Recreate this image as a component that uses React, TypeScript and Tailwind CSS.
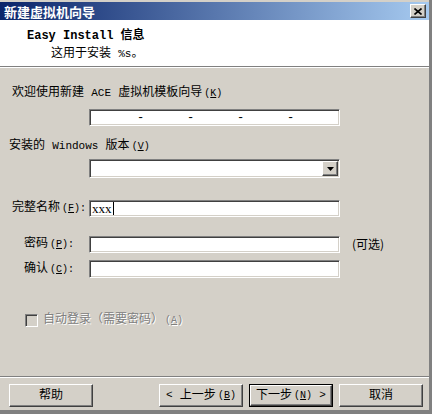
import React from "react";

const sunken =
  "border border-t-[#808080] border-l-[#808080] border-b-white border-r-white shadow-[inset_1px_1px_0_#404040,inset_-1px_-1px_0_#d4d0c8]";
const raised =
  "border border-t-white border-l-white border-b-[#404040] border-r-[#404040] shadow-[inset_-1px_-1px_0_#808080] bg-[#d4d0c8]";

const font = "font-['Liberation_Mono','Noto_Sans_CJK_SC',monospace]";

// half-width latin runs, SimSun style
const L = ({ children }: { children: React.ReactNode }) => <span className="text-[11px]">{children}</span>;

const Key = ({ k }: { k: string }) => (
  <span className="text-[10px] ml-[2px]">
    (<u>{k}</u>)
  </span>
);

const Field = ({ children, className = "" }: { children?: React.ReactNode; className?: string }) => (
  <div className={`${sunken} bg-white w-[251px] h-[17px] flex items-center ${className}`}>{children}</div>
);

const Btn = ({ children, primary }: { children: React.ReactNode; primary?: boolean }) =>
  primary ? (
    <div className="border border-black w-[84px] h-[23px] flex">
      <div className={`${raised} flex-1 flex items-center justify-center text-[12px] leading-none text-black`}>{children}</div>
    </div>
  ) : (
    <div className={`${raised} w-[84px] h-[23px] flex items-center justify-center text-[12px] leading-none text-black`}>{children}</div>
  );

export default function App() {
  return (
    <div className={`w-[432px] h-[414px] bg-[#d4d0c8] flex flex-col border-r-[3px] border-b-[4px] border-[#808080] overflow-hidden ${font} text-[12px] text-black`}>
      {/* title bar */}
      <div className="pt-[2px]">
        <div className="h-[18px] bg-[linear-gradient(to_right,#0a246a,#a6caf0)] flex items-center justify-between pl-[4px] pr-[3px]">
          <span className="font-['Noto_Sans_CJK_SC',sans-serif] font-bold text-white text-[13px] leading-none">新建虚拟机向导</span>
          <div className={`${raised} w-[16px] h-[14px] flex items-center justify-center`}>
            <svg width="8" height="7" viewBox="0 0 8 7">
              <path d="M0.5 0.5 L7.5 6.5 M7.5 0.5 L0.5 6.5" stroke="#000" strokeWidth="1.6" />
            </svg>
          </div>
        </div>
      </div>

      {/* header */}
      <div className="h-[47px] bg-white border-b border-[#808080] pl-[27px] pt-[8px]">
        <div className="font-bold leading-[16px]">Easy Install 信息</div>
        <div className="pl-[24px] leading-[16px] mt-[2px]">
          这用于安装 <L>%s</L>。
        </div>
      </div>
      <div className="h-px bg-white" />

      {/* body */}
      <div className="flex-1 flex flex-col">
        <div className="pl-[12px] mt-[18px] leading-[14px]">
          欢迎使用新建 <L>ACE</L> 虚拟机模板向导<Key k="K" />
        </div>
        <Field className="ml-[89px] mt-[8px] pl-[47px] items-end pb-[1px]">
          <span className="w-[50px] leading-none">-</span>
          <span className="w-[50px] leading-none">-</span>
          <span className="w-[50px] leading-none">-</span>
          <span className="w-[50px] leading-none">-</span>
        </Field>

        <div className="pl-[9px] mt-[13px] leading-[14px]">
          安装的 <L>Windows</L> 版本<Key k="V" />
        </div>
        <div className={`${sunken} bg-white ml-[89px] mt-[5px] w-[251px] h-[19px] flex justify-end p-[1px]`}>
          <div className={`${raised} w-[16px] h-full flex items-center justify-center`}>
            <svg width="7" height="4" viewBox="0 0 7 4">
              <path d="M0 0 H7 L3.5 4 Z" fill="#000" />
            </svg>
          </div>
        </div>

        <div className="flex items-center mt-[22px]">
          <span className="pl-[12px] w-[89px] leading-[14px]">
            完整名称<Key k="F" />
            <span className="text-[10px]">:</span>
          </span>
          <Field className="pl-[2px]">
            <span className="font-['Liberation_Serif',serif] text-[13px] leading-none">xxx</span>
            <span className="w-px h-[13px] bg-black ml-[1px]" />
          </Field>
        </div>

        <div className="flex items-center mt-[18px]">
          <span className="pl-[24px] w-[89px] leading-[14px]">
            密码<Key k="P" />
            <span className="text-[10px]">:</span>
          </span>
          <Field />
          <span className="ml-[12px] font-['Noto_Sans_CJK_SC',sans-serif]">(可选)</span>
        </div>

        <div className="flex items-center mt-[7px]">
          <span className="pl-[24px] w-[89px] leading-[14px]">
            确认<Key k="C" />
            <span className="text-[10px]">:</span>
          </span>
          <Field className="h-[18px]" />
        </div>

        <div className="flex items-center mt-[35px] pl-[25px]">
          <div className={`${sunken} w-[13px] h-[13px] bg-[#d4d0c8]`} />
          <span className="ml-[5px] text-[#808080] [text-shadow:1px_1px_0_#fff] leading-[14px]">
            自动登录（需要密码）<Key k="A" />
          </span>
        </div>

        <div className="flex-1" />

        {/* footer */}
        <div className="border-t border-[#808080]">
          <div className="h-px bg-white" />
          <div className="flex items-center pt-[6px] pb-[3px] pl-[9px]">
            <Btn>帮助</Btn>
            <div className="ml-[66px]">
              <Btn>
                <L>&lt;</L>&nbsp;上一步<Key k="B" />
              </Btn>
            </div>
            <div className="ml-[6px]">
              <Btn primary>
                下一步<Key k="N" />&nbsp;<L>&gt;</L>
              </Btn>
            </div>
            <div className="ml-[6px]">
              <Btn>取消</Btn>
            </div>
          </div>
        </div>
      </div>
    </div>
  );
}
